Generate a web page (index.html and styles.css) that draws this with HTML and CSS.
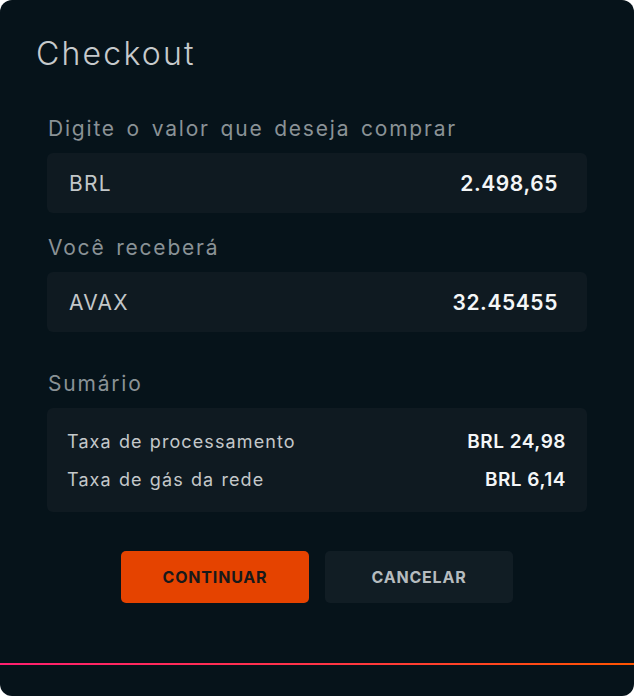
FILE: index.html
```html
<!DOCTYPE html>
<html lang="pt-BR">
<head>
<meta charset="utf-8">
<title>Checkout</title>
<link rel="stylesheet" href="styles.css">
</head>
<body>
<div class="card">
  <h1 class="title">Checkout</h1>
  <div class="content">
    <div class="label label-first">Digite o valor que deseja comprar</div>
    <div class="field">
      <span class="currency">BRL</span>
      <span class="amount">2.498,65</span>
    </div>
    <div class="label label-second">Você receberá</div>
    <div class="field">
      <span class="currency">AVAX</span>
      <span class="amount">32.45455</span>
    </div>
    <div class="label label-third">Sumário</div>
    <div class="summary">
      <div class="row"><span class="row-label">Taxa de processamento</span><span class="row-value">BRL 24,98</span></div>
      <div class="row"><span class="row-label">Taxa de gás da rede</span><span class="row-value">BRL 6,14</span></div>
    </div>
    <div class="actions">
      <button class="btn btn-primary">CONTINUAR</button>
      <button class="btn btn-secondary">CANCELAR</button>
    </div>
  </div>
  <div class="accent"></div>
</div>
</body>
</html>
```
FILE: styles.css
```css
* { box-sizing: border-box; }
html, body {
  margin: 0;
  padding: 0;
  background: #ffffff;
}
body {
  font-family: Inter, "Noto Sans", sans-serif;
}
.card {
  width: 634px;
  height: 696px;
  background: #06131a;
  border-radius: 12px;
  padding-top: 34px;
  display: flex;
  flex-direction: column;
}
.title {
  margin: 0 0 0 36px;
  font-size: 32px;
  line-height: 40px;
  font-weight: 300;
  color: #c6cacc;
  letter-spacing: 2.2px;
}
.content {
  padding: 0 47px 0 47px;
  display: flex;
  flex-direction: column;
}
.label {
  font-size: 21px;
  line-height: 24px;
  color: #8a9296;
  letter-spacing: 1.8px;
  word-spacing: 3px;
  margin-bottom: 12px;
  padding-left: 1px;
}
.label-first { margin-top: 43px; }
.label-second { margin-top: 23px; }
.label-third { margin-top: 40px; }
.field {
  height: 60px;
  background: #0f1a21;
  border-radius: 6px;
  display: flex;
  align-items: center;
  justify-content: space-between;
  padding: 0 29px 0 22px;
}
.currency {
  font-size: 21px;
  color: #c3c7c9;
  letter-spacing: 1.2px;
}
.amount {
  font-size: 21px;
  font-weight: 600;
  color: #f4f6f7;
  letter-spacing: 0.6px;
}
.summary {
  background: #0f1a21;
  border-radius: 6px;
  padding: 22px 21px 20px 20px;
  display: flex;
  flex-direction: column;
  gap: 14px;
}
.row {
  display: flex;
  justify-content: space-between;
  align-items: center;
  line-height: 24px;
}
.row-label {
  font-size: 18px;
  color: #c4c8ca;
  letter-spacing: 1.1px;
  word-spacing: 1px;
}
.row-value {
  font-size: 19px;
  font-weight: 600;
  color: #f4f6f7;
  letter-spacing: 0.5px;
}
.actions {
  margin-top: 39px;
  display: flex;
  justify-content: center;
  gap: 16px;
}
.btn {
  width: 188px;
  height: 52px;
  border: none;
  border-radius: 5px;
  font-family: Inter, "Noto Sans", sans-serif;
  font-size: 16px;
  font-weight: 700;
  letter-spacing: 0.8px;
  cursor: pointer;
}
.btn-primary {
  background: #e54300;
  color: #17191a;
}
.btn-secondary {
  background: #111d24;
  color: #b6bcbf;
}
.accent {
  margin-top: auto;
  margin-bottom: 31px;
  height: 2px;
  background: linear-gradient(90deg, #ff2070 0%, #ff3447 50%, #ff5400 100%);
}
```
